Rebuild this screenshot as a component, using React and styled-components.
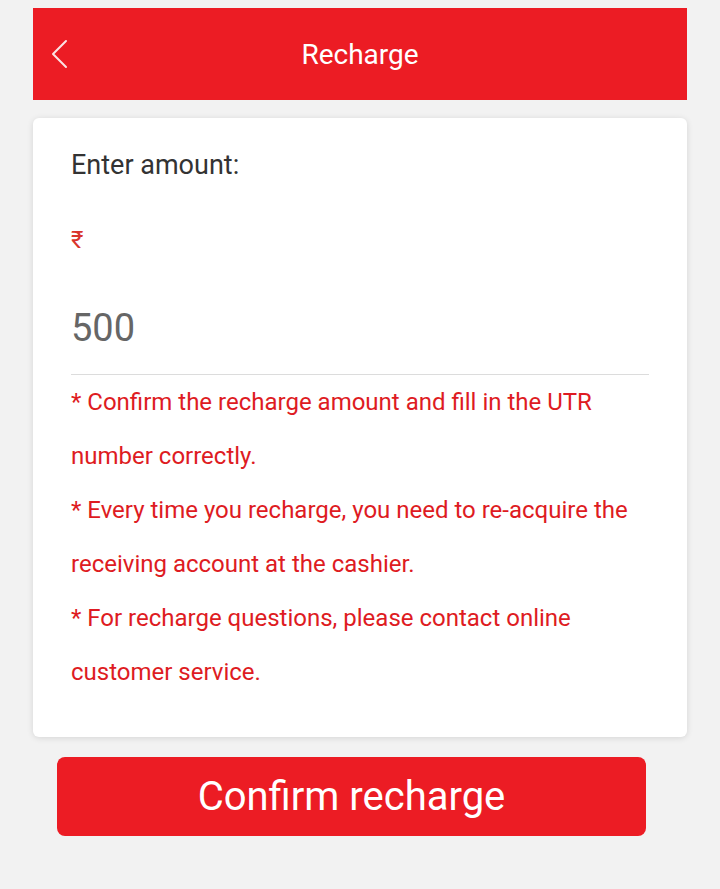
import styled, { createGlobalStyle } from "styled-components";

const GlobalStyle = createGlobalStyle`
  html, body {
    margin: 0;
    background: #f2f2f2;
    font-family: Roboto, "Liberation Sans", sans-serif;
  }
`;

const Page = styled.div`
  padding: 8px 33px 40px;
  display: flex;
  flex-direction: column;
`;

const Header = styled.header`
  position: relative;
  height: 92px;
  background: #ec1c24;
  display: flex;
  align-items: center;
  justify-content: center;
`;

const BackButton = styled.button`
  position: absolute;
  left: 14px;
  top: 30px;
  width: 30px;
  height: 32px;
  padding: 0;
  border: 0;
  background: none;
  cursor: pointer;
`;

const Title = styled.h1`
  margin: 0;
  color: #fff;
  font-size: 28px;
  font-weight: 400;
`;

const Card = styled.section`
  margin-top: 18px;
  background: #fff;
  border-radius: 6px;
  box-shadow: 0 1px 6px rgba(0, 0, 0, 0.12);
  padding: 30px 38px 38px;
`;

const Label = styled.div`
  color: #333;
  font-size: 27px;
  line-height: 34px;
`;

const Currency = styled.div`
  margin-top: 46px;
  color: #d9352b;
  font-size: 24px;
  line-height: 24px;
`;

const AmountInput = styled.input`
  display: block;
  width: 100%;
  box-sizing: border-box;
  margin: 54px 0 0;
  padding: 0 0 24px;
  height: 69px;
  border: 0;
  border-bottom: 1px solid #dcdcdc;
  outline: none;
  font-family: inherit;
  font-size: 38px;
  line-height: 44px;
  color: #666;
  background: transparent;
`;

const Notes = styled.div`
  color: #de1b22;
  font-size: 24px;
  line-height: 54px;
`;

const ConfirmButton = styled.button`
  margin: 20px 41px 0 24px;
  height: 79px;
  border: 0;
  border-radius: 8px;
  background: #ec1c24;
  color: #fff;
  font-family: inherit;
  font-size: 40px;
  cursor: pointer;
`;

const notes = [
  "* Confirm the recharge amount and fill in the UTR number correctly.",
  "* Every time you recharge, you need to re-acquire the receiving account at the cashier.",
  "* For recharge questions, please contact online customer service.",
];

export default function App() {
  return (
    <>
      <GlobalStyle />
      <Page>
        <Header>
          <BackButton aria-label="Back">
            <svg width="30" height="32" viewBox="0 0 30 32" fill="none">
              <path
                d="M19 3 L6 16 L19 29"
                stroke="#fbe3e4"
                strokeWidth="2"
                strokeLinecap="round"
                strokeLinejoin="round"
              />
            </svg>
          </BackButton>
          <Title>Recharge</Title>
        </Header>

        <Card>
          <Label>Enter amount:</Label>
          <Currency>₹</Currency>
          <AmountInput defaultValue="500" />
          <Notes>
            {notes.map((note) => (
              <div key={note}>{note}</div>
            ))}
          </Notes>
        </Card>

        <ConfirmButton>Confirm recharge</ConfirmButton>
      </Page>
    </>
  );
}
